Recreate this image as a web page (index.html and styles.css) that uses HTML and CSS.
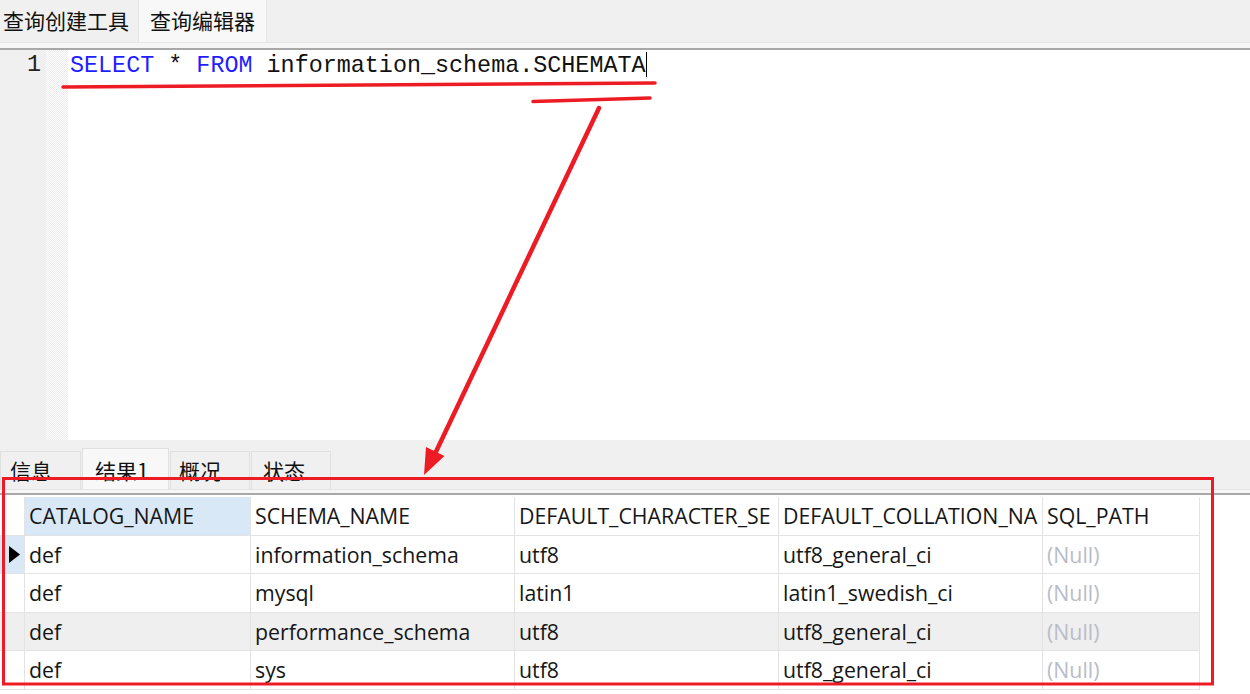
FILE: index.html
```html
<!DOCTYPE html>
<html lang="zh">
<head>
<meta charset="utf-8">
<title>查询编辑器</title>
<link rel="stylesheet" href="styles.css">
</head>
<body>
<div class="app">
  <div class="toptabs">
    <div class="ttab">查询创建工具</div>
    <div class="ttab active">查询编辑器</div>
  </div>
  <div class="topstrip"></div>
  <div class="editor">
    <div class="gutter"><span class="ln">1</span></div>
    <div class="margin"></div>
    <div class="code"><span class="kw">SELECT</span> * <span class="kw">FROM</span> information_schema.SCHEMATA<span class="caret"></span></div>
  </div>
  <div class="restabs">
    <div class="rtab w1">信息</div>
    <div class="rtab w2 active">结果1</div>
    <div class="rtab w3">概况</div>
    <div class="rtab w4">状态</div>
  </div>
  <div class="resstrip"></div>
  <div class="gridwrap">
    <div class="grid">
      <div class="cell ind"></div>
      <div class="cell hd sel">CATALOG_NAME</div>
      <div class="cell hd">SCHEMA_NAME</div>
      <div class="cell hd">DEFAULT_CHARACTER_SE</div>
      <div class="cell hd">DEFAULT_COLLATION_NA</div>
      <div class="cell hd">SQL_PATH</div>

      <div class="cell ind cur"><svg class="tri" width="11" height="17" viewBox="0 0 11 17"><path d="M0 0 L11 8.5 L0 17 Z" fill="#000"/></svg></div>
      <div class="cell">def</div>
      <div class="cell">information_schema</div>
      <div class="cell">utf8</div>
      <div class="cell">utf8_general_ci</div>
      <div class="cell null">(Null)</div>

      <div class="cell ind"></div>
      <div class="cell">def</div>
      <div class="cell">mysql</div>
      <div class="cell">latin1</div>
      <div class="cell">latin1_swedish_ci</div>
      <div class="cell null">(Null)</div>

      <div class="cell ind alt"></div>
      <div class="cell alt">def</div>
      <div class="cell alt">performance_schema</div>
      <div class="cell alt">utf8</div>
      <div class="cell alt">utf8_general_ci</div>
      <div class="cell alt null">(Null)</div>

      <div class="cell ind"></div>
      <div class="cell">def</div>
      <div class="cell">sys</div>
      <div class="cell">utf8</div>
      <div class="cell">utf8_general_ci</div>
      <div class="cell null">(Null)</div>
    </div>
  </div>
  <svg class="annot" width="1250" height="694" viewBox="0 0 1250 694">
    <path d="M63 87 Q360 84.5 655 83" fill="none" stroke="#ed1c24" stroke-width="3.5" stroke-linecap="round"/>
    <path d="M533 101.5 L650 98" fill="none" stroke="#ed1c24" stroke-width="3.5" stroke-linecap="round"/>
    <path d="M599 108 L433 458" fill="none" stroke="#ed1c24" stroke-width="4.5" stroke-linecap="round"/>
    <path d="M424 475 L426 447 L444.5 456 Z" fill="#ed1c24"/>
    <rect x="3.5" y="478.5" width="1209" height="205.5" fill="none" stroke="#ed1c24" stroke-width="3"/>
  </svg>
</div>
</body>
</html>
```

FILE: styles.css
```css
html, body {
  margin: 0;
  padding: 0;
  background: #ffffff;
}
body {
  width: 1250px;
  height: 694px;
  overflow: hidden;
}
.app {
  position: relative;
  width: 1250px;
  height: 694px;
  overflow: hidden;
  font-family: "Noto Sans CJK SC", "Noto Sans", sans-serif;
  color: #111;
}
.toptabs {
  height: 42px;
  background: #f0f0f0;
  display: flex;
  align-items: stretch;
}
.ttab {
  font-size: 21px;
  line-height: 40px;
  padding: 0 4px 0 3px;
  width: 138px;
  box-sizing: border-box;
  white-space: nowrap;
  color: #111;
}
.ttab.active {
  width: 129px;
  padding-left: 11px;
  background: #f8f8f8;
  border-left: 1px solid #e6e6e6;
  border-right: 1px solid #e6e6e6;
}
.topstrip {
  height: 5px;
  background: #f6f6f6;
  border-top: 1px solid #e6e6e6;
  border-bottom: 2px solid #a8a8a8;
}
.editor {
  height: 390px;
  display: flex;
  background: #ffffff;
}
.gutter {
  width: 46px;
  background: #f0f0f0;
  box-sizing: border-box;
  padding: 2px 5px 0 0;
  text-align: right;
}
.ln {
  font-family: "Liberation Mono", monospace;
  font-size: 23.4px;
  line-height: 26px;
  color: #222;
}
.margin {
  width: 22px;
  background-color: #ffffff;
  background-image: repeating-conic-gradient(#ececec 0 25%, #ffffff 0 50%);
  background-size: 2px 2px;
}
.code {
  padding: 2px 0 0 2px;
  font-family: "Liberation Mono", monospace;
  font-size: 23.4px;
  line-height: 26px;
  color: #111;
  white-space: pre;
  position: relative;
}
.kw {
  color: #1e1eff;
}
.caret {
  display: inline-block;
  width: 1.5px;
  height: 25px;
  background: #000;
  vertical-align: -5px;
}
.restabs {
  height: 49px;
  background: #f0f0f0;
  display: flex;
  align-items: flex-end;
  padding-left: 0;
}
.rtab {
  height: 38px;
  box-sizing: border-box;
  border: 1px solid #e0e0e0;
  border-bottom: none;
  background: #f0f0f0;
  font-size: 21px;
  line-height: 36px;
  padding-left: 10px;
  white-space: nowrap;
  color: #111;
  margin-right: 1px;
}
.rtab.active {
  height: 41px;
  line-height: 42px;
  background: #f8f8f8;
  padding-left: 12px;
}
.w1 { width: 81px; padding-left: 9px; }
.w2 { width: 87px; }
.w3 { width: 80px; padding-left: 8px; }
.w4 { width: 80px; padding-left: 11px; }
.resstrip {
  height: 3px;
  background: #f6f6f6;
  border-top: 1px solid #e4e4e4;
  border-bottom: 2px solid #a8a8a8;
}
.gridwrap {
  padding-top: 2px;
  background: #ffffff;
  height: 200px;
}
.grid {
  display: grid;
  grid-template-columns: 25px 226px 264px 264px 264px 157px;
  grid-auto-rows: 38.5px;
  width: 1200px;
  font-family: "Open Sans", "Noto Sans", sans-serif;
  font-size: 21.3px;
}
.cell {
  box-sizing: border-box;
  border-right: 1px solid #e3e3e3;
  border-bottom: 1px solid #e3e3e3;
  padding-left: 4px;
  display: flex;
  align-items: center;
  white-space: nowrap;
  overflow: hidden;
  color: #161616;
  background: #ffffff;
}
.cell.hd {
  color: #161616;
}
.cell.sel, .cell.cur {
  background: #d9e8f6;
}
.cell.ind {
  padding-left: 0;
}
.cell.cur {
  justify-content: flex-start;
  padding-left: 9px;
}
.cell.alt {
  background: #efefef;
}
.cell.null {
  color: #b9bdc8;
}
.annot {
  position: absolute;
  left: 0;
  top: 0;
  pointer-events: none;
}
```
